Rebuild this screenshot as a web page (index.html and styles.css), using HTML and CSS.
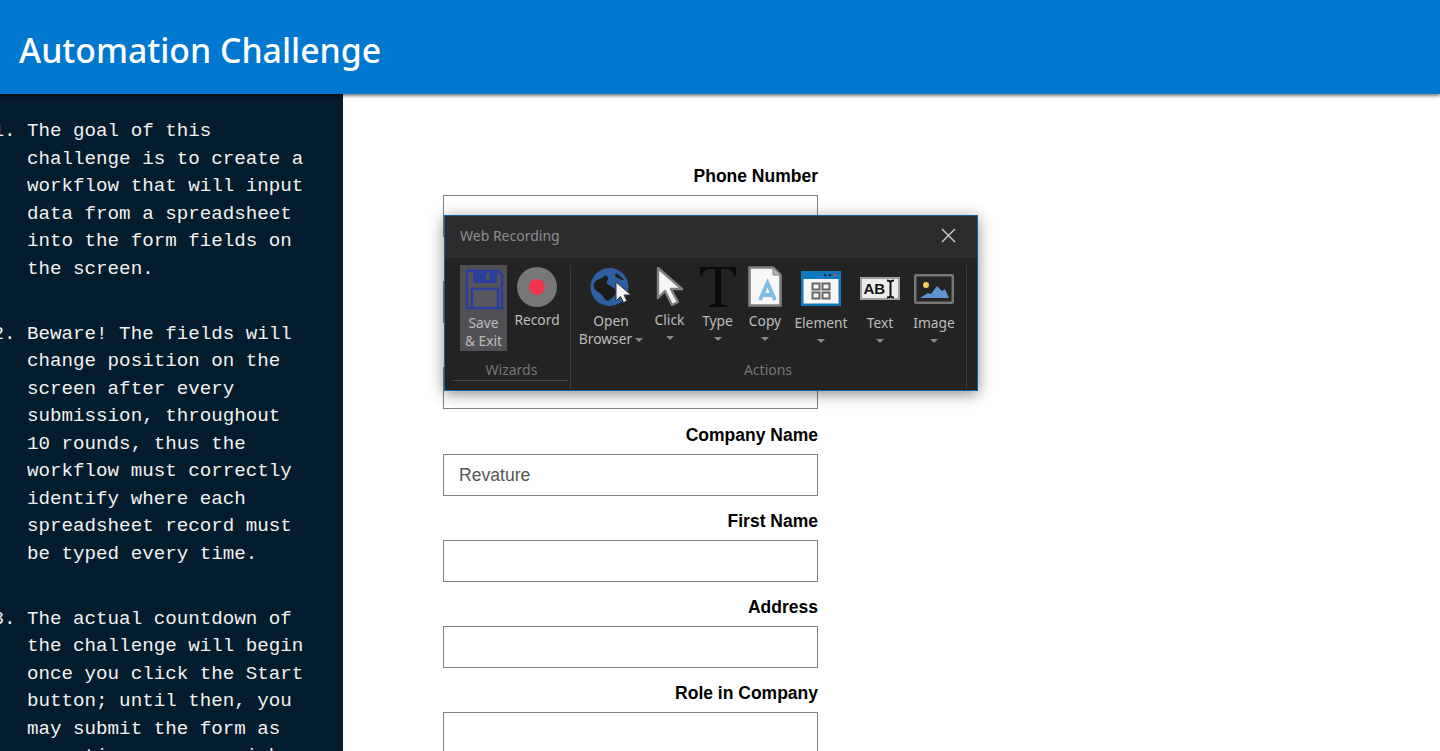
FILE: index.html
```html
<!DOCTYPE html>
<html lang="en">
<head>
  <meta charset="UTF-8" />
  <title>Automation Challenge</title>
  <link rel="stylesheet" href="styles.css">
</head>
<body>
  <header class="topbar">
    <h1>Automation Challenge</h1>
  </header>

  <div class="page">
    <aside class="sidebar">
      <ol>
        <li>The goal of this challenge is to create a workflow that will input data from a spreadsheet into the form fields on the screen.</li>
        <li>Beware! The fields will change position on the screen after every submission, throughout 10 rounds, thus the workflow must correctly identify where each spreadsheet record must be typed every time.</li>
        <li>The actual countdown of the challenge will begin once you click the Start button; until then, you may submit the form as many times as you wish without receiving penalties.</li>
      </ol>
    </aside>

    <main class="content">
      <form class="challenge-form">
        <div class="field"><label>Phone Number</label><input type="text"></div>
        <div class="field"><label>Last Name</label><input type="text"></div>
        <div class="field"><label>Email</label><input type="text"></div>
        <div class="field"><label>Company Name</label><input type="text" value="Revature"></div>
        <div class="field"><label>First Name</label><input type="text"></div>
        <div class="field"><label>Address</label><input type="text"></div>
        <div class="field"><label>Role in Company</label><input type="text"></div>
      </form>
    </main>
  </div>

  <!-- floating recorder toolbar -->
  <div class="recorder">
    <div class="recorder-title">
      <span>Web Recording</span>
      <svg class="close-icon" width="15" height="15" viewBox="0 0 15 15"><path d="M1 1L14 14M14 1L1 14" stroke="#d0d0d0" stroke-width="1.4" fill="none"/></svg>
    </div>
    <div class="ribbon">
      <section class="group group-wizards">
        <div class="tools">
          <div class="tool tool-save">
            <svg width="40" height="42" viewBox="0 0 40 42">
              <path d="M3 3H34L38 7V40H3Z" fill="#55555a" stroke="#2d3f9c" stroke-width="2.500"/>
              <rect x="9" y="3" width="24" height="12" fill="#2d3f9c"/>
              <rect x="22" y="5" width="3.500" height="7" fill="#55555a"/>
              <rect x="8" y="21" width="26" height="19" fill="#58585c" stroke="#2d3f9c" stroke-width="2.500"/>
            </svg>
            <span>Save<br>&amp; Exit</span>
          </div>
          <div class="tool tool-record">
            <svg width="40" height="40" viewBox="0 0 40 40">
              <circle cx="20" cy="20" r="20" fill="#77777a"/>
              <circle cx="20" cy="20" r="8" fill="#f0354f"/>
            </svg>
            <span>Record</span>
          </div>
        </div>
        <div class="group-name">Wizards</div>
      </section>

      <section class="group group-actions">
        <div class="tools">
          <div class="tool tool-browser">
            <svg width="44" height="40" viewBox="0 0 44 40">
              <circle cx="20.500" cy="20" r="19" fill="#2f5fa3"/>
              <path d="M5 17C8 11 11 13 14 10C17 7 21 10 18 14C16 18 22 18 26 22C28 28 23 31 19 34C15 33 14 27 9 25C6 23 4 20 5 17Z" fill="#1c1c1c"/>
              <path d="M27 6C30 8 33 10 35 13C31 13 28 11 26 9Z" fill="#1c1c1c"/>
              <path d="M27 15V34L31.500 29.500L34.500 35.500L38 34L35 28L42 28Z" fill="#f6f6f6" stroke="#303030" stroke-width="1"/>
            </svg>
            <span>Open<br>Browser<i class="caret caret-inline"></i></span>
          </div>
          <div class="tool tool-click">
            <svg width="32" height="42" viewBox="0 0 32 42">
              <path d="M4 2V32L11 25L18 39L24 36L17 23L28 23Z" fill="#f5f5f5" stroke="#808080" stroke-width="2.400" stroke-linejoin="round"/>
            </svg>
            <span>Click</span><i class="caret"></i>
          </div>
          <div class="tool tool-type">
            <svg width="38" height="42" viewBox="0 0 38 42">
              <path d="M1 1H37V10H35C34 5 31 3 26 3H22V36C22 38 23 39 28 39V41H10V39C15 39 16 38 16 36V3H12C7 3 4 5 3 10H1Z" fill="#0a0a0a"/>
            </svg>
            <span>Type</span><i class="caret"></i>
          </div>
          <div class="tool tool-copy">
            <svg width="34" height="41" viewBox="0 0 34 41">
              <path d="M1.500 1.500H25L32.500 9V39.500H1.500Z" fill="#f7f7f7" stroke="#808080" stroke-width="2.600"/>
              <path d="M25 1.500V9H32.500Z" fill="#b5b5b5" stroke="#808080" stroke-width="1"/>
              <path d="M12 34L19.500 17L27 34M14.500 29H24.500" fill="none" stroke="#7cbde8" stroke-width="3.800"/>
            </svg>
            <span>Copy</span><i class="caret"></i>
          </div>
          <div class="tool tool-element">
            <svg width="40" height="35" viewBox="0 0 40 35">
              <rect width="40" height="35" fill="#0f79bd"/>
              <rect x="2.500" y="8" width="35" height="24.500" fill="#f7f7f7"/>
              <circle cx="24" cy="4" r="1.300" fill="#2c2c3a"/>
              <circle cx="29" cy="4" r="1.300" fill="#2c2c3a"/>
              <circle cx="34" cy="4" r="1.300" fill="#e0405a"/>
              <path d="M11.500 12.500h7v6h-7ZM21.500 12.500h7v6h-7ZM11.500 21.500h7v6h-7ZM21.500 21.500h7v6h-7Z" fill="none" stroke="#666" stroke-width="2"/>
            </svg>
            <span>Element</span><i class="caret"></i>
          </div>
          <div class="tool tool-text">
            <svg width="40" height="23" viewBox="0 0 40 23">
              <rect x="1" y="1" width="38" height="21" fill="#ececec" stroke="#a0a0a0" stroke-width="2"/>
              <text x="3.500" y="17" class="abi-text">AB</text>
              <path d="M27 3.500C29 3.500 30 4 30.500 5C31 4 32 3.500 34 3.500M30.500 5V19M27 20.500C29 20.500 30 20 30.500 19C31 20 32 20.500 34 20.500" fill="none" stroke="#111" stroke-width="2"/>
            </svg>
            <span>Text</span><i class="caret"></i>
          </div>
          <div class="tool tool-image">
            <svg width="40" height="30" viewBox="0 0 40 30">
              <rect x="1.250" y="1.250" width="37.500" height="27.500" rx="1" fill="#242424" stroke="#77777a" stroke-width="2.500"/>
              <circle cx="12" cy="11" r="3" fill="#f2cf5b"/>
              <path d="M6 24L14 19L17 20L23 12L28 17L31 15L35 24Z" fill="#5f93d3"/>
            </svg>
            <span>Image</span><i class="caret"></i>
          </div>
        </div>
        <div class="group-name">Actions</div>
      </section>
    </div>
  </div>
</body>
</html>
```

FILE: styles.css
```css
html, body {
  height: 100%;
}
body {
  margin: 0;
  height: 751px;
  overflow: hidden;
  background: white;
  font-family: "Liberation Sans", Arial, sans-serif;
  position: relative;
}

.topbar {
  height: 94px;
  background-color: #0078d0;
  box-shadow: 0 2px 3px rgba(0, 0, 0, 0.5);
  position: relative;
  z-index: 1;
  display: flex;
  align-items: center;
  padding-left: 19px;
}
.topbar h1 {
  margin: 0;
  padding-top: 6px;
  color: white;
  font-family: "Noto Sans", sans-serif;
  font-size: 33.8px;
  font-weight: 500;
}

.page {
  display: flex;
  height: 657px;
}

.sidebar {
  width: 343px;
  flex: none;
  background-color: #031c2e;
  color: #f2f2f2;
  overflow: hidden;
  font-family: "Liberation Mono", "Courier New", monospace;
  font-size: 19.2px;
  line-height: 27.5px;
}
.sidebar ol {
  margin: 0;
  padding: 24px 36px 0 27px;
}
.sidebar li {
  margin-bottom: 37.5px;
}

.content {
  flex: 1;
  padding: 72px 0 0 100px;
}
.challenge-form {
  width: 375px;
}
.field {
  height: 86.2px;
  text-align: right;
}
.field label {
  display: block;
  font-weight: bold;
  font-size: 17.5px;
  line-height: 20px;
  color: black;
  margin-bottom: 9px;
}
.field input {
  display: block;
  width: 100%;
  height: 42px;
  box-sizing: border-box;
  border: 1px solid #808080;
  padding: 2px 15px 0;
  font-family: "Liberation Sans", Arial, sans-serif;
  font-size: 17.6px;
  color: #555;
  background: white;
}

/* recorder window sits on top of the form */
.recorder {
  position: absolute;
  left: 444px;
  top: 215px;
  width: 534px;
  height: 176px;
  box-sizing: border-box;
  border: 1px solid #0f66a6;
  background-color: #232323;
  box-shadow: 0 3px 14px rgba(0, 0, 0, 0.45);
  font-family: "Noto Sans", sans-serif;
  color: #bdbdbd;
  z-index: 2;
}
.recorder-title {
  height: 42px;
  box-sizing: border-box;
  padding: 0 21px 4px 15px;
  background-color: #2c2c2e;
  display: flex;
  align-items: center;
  justify-content: space-between;
  font-size: 14px;
  color: #8e8e8e;
}

.ribbon {
  display: flex;
  padding-top: 7px;
}
.group {
  display: flex;
  flex-direction: column;
  height: 124px;
  box-sizing: border-box;
  border-right: 1px solid #3a3a3a;
  position: relative;
}
.group-wizards {
  width: 126px;
  padding-left: 15px;
}
.group-actions {
  width: 396px;
  padding-left: 7px;
}
.group-wizards::after {
  content: "";
  position: absolute;
  left: 8px;
  right: 2px;
  bottom: 8px;
  border-bottom: 1px solid #444;
}
.tools {
  display: flex;
  height: 90px;
}
.group-name {
  text-align: center;
  font-size: 14px;
  line-height: 20px;
  margin-top: 5px;
  color: #777;
}
.group-wizards .group-name {
  margin-left: -7px;
}
.group-actions .group-name {
  margin-left: -8px;
}

.tool {
  display: flex;
  flex-direction: column;
  align-items: center;
  flex: none;
  text-align: center;
  font-size: 13.8px;
  line-height: 18px;
  white-space: nowrap;
}
.tool svg {
  flex: none;
}

.tool-save {
  width: 47px;
  height: 86px;
  padding-top: 3px;
  box-sizing: border-box;
  background-color: #515155;
}
.tool-save span {
  margin-top: 4px;
}
.tool-record {
  width: 60px;
  padding-top: 2px;
}
.tool-record span {
  margin-top: 4px;
}
.tool-browser {
  width: 66px;
  padding-top: 2px;
}
.tool-browser span {
  margin-top: 5px;
}
.tool-click {
  width: 51px;
  padding-top: 1px;
}
.tool-click span {
  margin-top: 3px;
}
.tool-type {
  width: 45px;
  padding-top: 1px;
}
.tool-type span {
  margin-top: 4px;
}
.tool-copy {
  width: 50px;
  padding-top: 1px;
}
.tool-copy span {
  margin-top: 5px;
}
.tool-element {
  width: 62px;
  padding-top: 6px;
}
.tool-element span {
  margin-top: 8px;
}
.tool-text {
  width: 56px;
  padding-top: 12px;
}
.tool-text span {
  margin-top: 14px;
}
.tool-image {
  width: 52px;
  padding-top: 9px;
}
.tool-image span {
  margin-top: 10px;
}

.caret {
  display: block;
  width: 0;
  height: 0;
  margin-top: 7px;
  border-left: 4px solid transparent;
  border-right: 4px solid transparent;
  border-top: 4px solid #8a8a8a;
}
.caret-inline {
  display: inline-block;
  margin: 0 0 2px 3px;
}
.abi-text {
  font-family: "Liberation Sans", sans-serif;
  font-size: 15px;
  font-weight: bold;
  fill: #111;
}
```
